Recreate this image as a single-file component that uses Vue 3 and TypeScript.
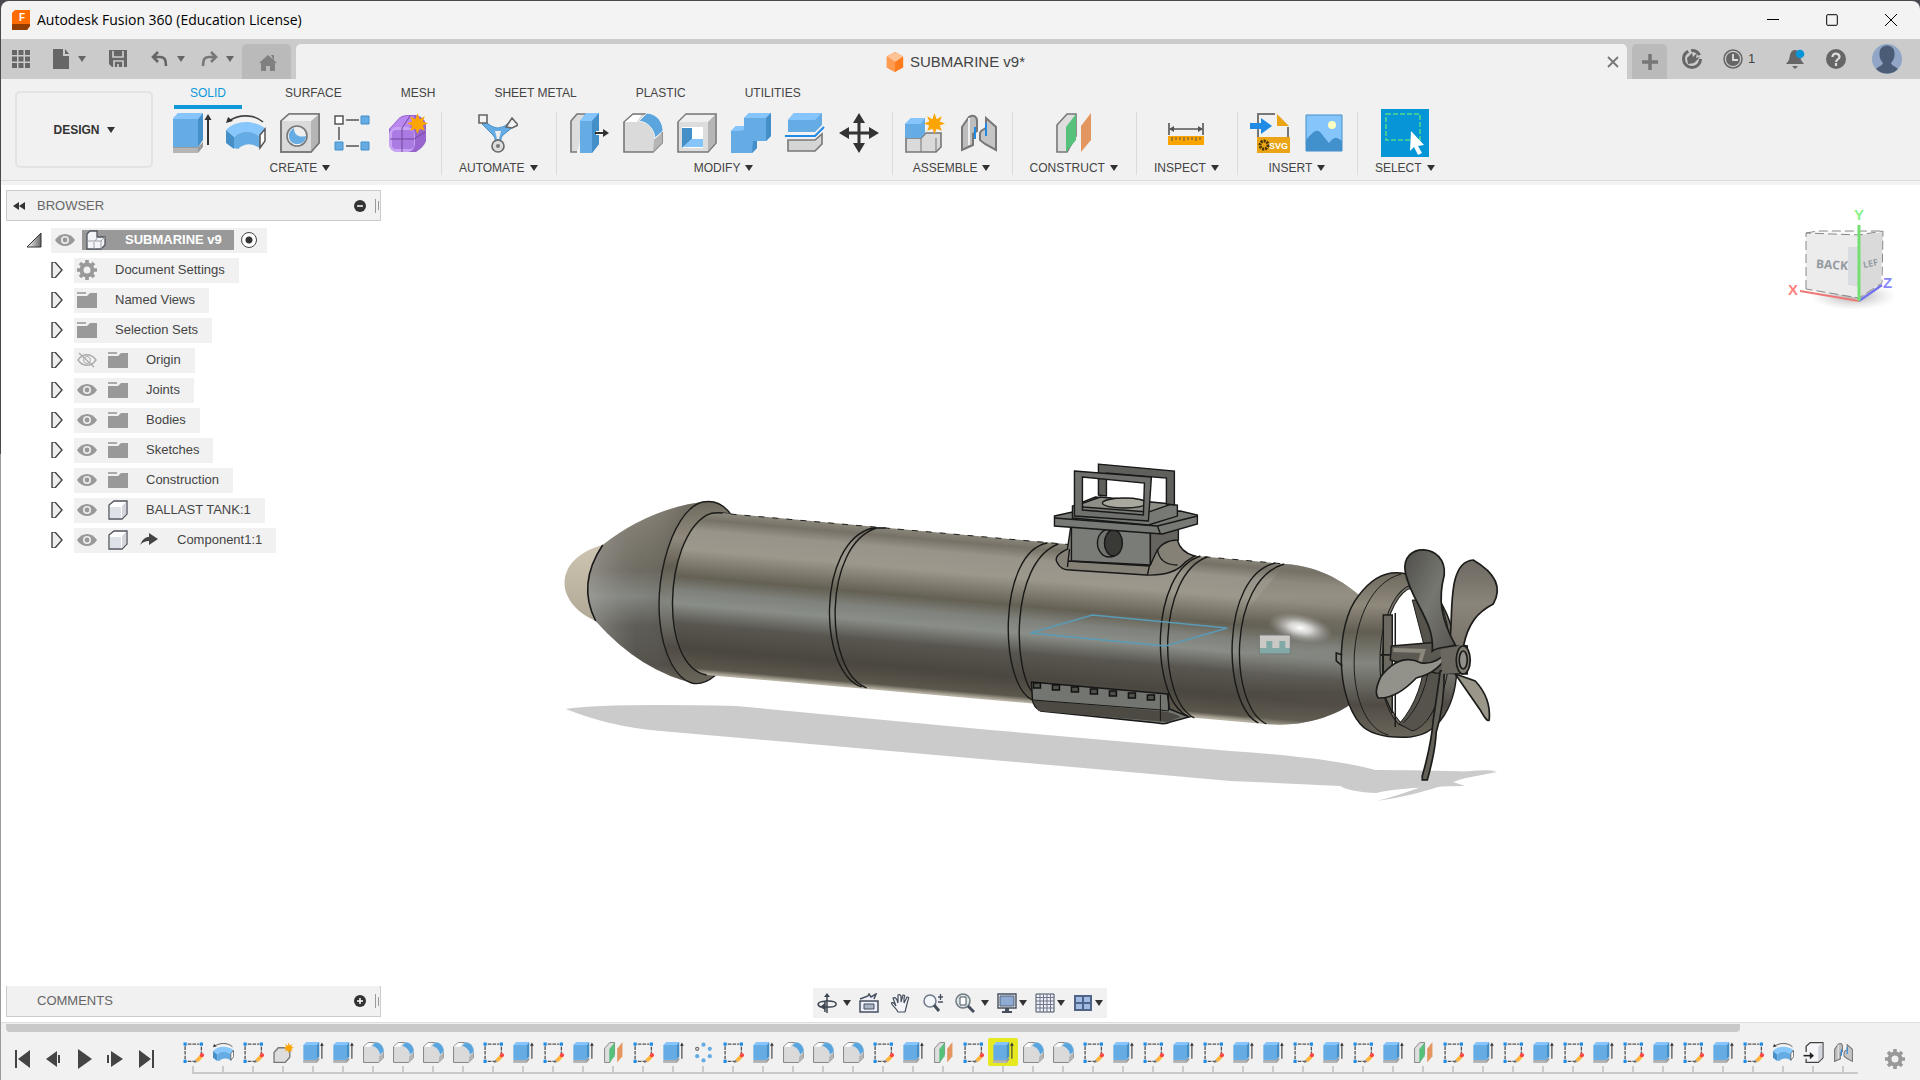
<script setup lang="ts">
interface Group { label: string; icons: string[]; active?: boolean }
interface Node { label: string; icons: string[] }
interface NavTool { icon: string; title: string; menu?: 'wide' | 'tight' }

const workspaces: string[] = ['SOLID', 'SURFACE', 'MESH', 'SHEET METAL', 'PLASTIC', 'UTILITIES']

const groups: Group[] = [
  { label: 'CREATE', icons: ['extrude', 'revolve', 'hole', 'pattern', 'form'] },
  { label: 'AUTOMATE', icons: ['automate'] },
  { label: 'MODIFY', icons: ['press', 'fillet', 'shell', 'combine', 'split', 'move'] },
  { label: 'ASSEMBLE', icons: ['component', 'joint'] },
  { label: 'CONSTRUCT', icons: ['plane'] },
  { label: 'INSPECT', icons: ['measure'] },
  { label: 'INSERT', icons: ['svgfile', 'image'] },
  { label: 'SELECT', icons: ['select'], active: true },
]

const nodes: Node[] = [
  { label: 'Document Settings', icons: ['gear'] },
  { label: 'Named Views', icons: ['folder'] },
  { label: 'Selection Sets', icons: ['folder'] },
  { label: 'Origin', icons: ['eyeoff', 'folder'] },
  { label: 'Joints', icons: ['eye', 'folder'] },
  { label: 'Bodies', icons: ['eye', 'folder'] },
  { label: 'Sketches', icons: ['eye', 'folder'] },
  { label: 'Construction', icons: ['eye', 'folder'] },
  { label: 'BALLAST TANK:1', icons: ['eye', 'box'] },
  { label: 'Component1:1', icons: ['eye', 'box', 'share'] },
]

const navTools: NavTool[] = [
  { icon: 'orbit', title: 'Orbit', menu: 'wide' },
  { icon: 'lookat', title: 'Look at' },
  { icon: 'hand', title: 'Pan' },
  { icon: 'zoom', title: 'Zoom' },
  { icon: 'fit', title: 'Fit', menu: 'wide' },
  { icon: 'display', title: 'Display settings', menu: 'tight' },
  { icon: 'grid', title: 'Grid and snaps', menu: 'tight' },
  { icon: 'views', title: 'Viewports', menu: 'tight' },
]

const codes: Record<string, string> = {
  S: 'sketch', R: 'revolve', N: 'newbody', E: 'extrude', F: 'fillet',
  P: 'plane', C: 'circular', X: 'derive', J: 'joint',
}
const features: string[] = 'SRSNEEFFFFSESEPSECSEFFFSEPSEFFSESESEESESEPSESESESESESRXJ'
  .split('')
  .map((c) => codes[c])
const currentFeature = 27

const playback: string[] = ['first', 'back', 'play', 'forward', 'last']
</script>

<template>
  <div class="window">
    <svg class="sprite" aria-hidden="true">
      <defs>
        <linearGradient id="hull" gradientUnits="userSpaceOnUse" x1="868" y1="526" x2="854" y2="687">
          <stop offset="0" stop-color="#8b867a" /><stop offset=".05" stop-color="#777267" />
          <stop offset=".12" stop-color="#99948a" /><stop offset=".24" stop-color="#9d988c" />
          <stop offset=".41" stop-color="#646054" /><stop offset=".5" stop-color="#80837d" />
          <stop offset=".58" stop-color="#8a8e88" /><stop offset=".7" stop-color="#595650" />
          <stop offset=".85" stop-color="#4a4640" /><stop offset=".97" stop-color="#5b574c" />
          <stop offset="1" stop-color="#b3ae9f" />
        </linearGradient>
        <linearGradient id="cone" x1="0" y1="0" x2="0" y2="1">
          <stop offset="0" stop-color="#8d877a" /><stop offset=".2" stop-color="#7a756a" />
          <stop offset=".38" stop-color="#6a665c" /><stop offset=".52" stop-color="#81847f" />
          <stop offset=".68" stop-color="#56544e" /><stop offset=".9" stop-color="#4c4942" />
          <stop offset="1" stop-color="#777266" />
        </linearGradient>
        <linearGradient id="coneEdge" x1="0" y1="0" x2="1" y2="0">
          <stop offset="0" stop-color="#aaa9a4" stop-opacity=".6" /><stop offset=".4" stop-color="#8d8c88" stop-opacity=".15" />
          <stop offset=".8" stop-color="#45423b" stop-opacity=".35" />
        </linearGradient>
        <linearGradient id="nose" x1="0" y1="0" x2="0" y2="1">
          <stop offset="0" stop-color="#cdc5b2" /><stop offset="1" stop-color="#b0a996" />
        </linearGradient>
        <linearGradient id="duct" x1="0" y1="0" x2="0" y2="1">
          <stop offset="0" stop-color="#6e695e" /><stop offset=".2" stop-color="#8f897c" />
          <stop offset=".36" stop-color="#625d52" /><stop offset=".55" stop-color="#83867f" />
          <stop offset=".8" stop-color="#504c45" /><stop offset="1" stop-color="#6b665b" />
        </linearGradient>
        <radialGradient id="glint"><stop offset="0" stop-color="#fff" /><stop offset=".35" stop-color="#eee" stop-opacity=".8" /><stop offset="1" stop-color="#aaa" stop-opacity="0" /></radialGradient>
        <radialGradient id="cubeShade"><stop offset="0" stop-color="#888" stop-opacity=".7" /><stop offset="1" stop-color="#bbb" stop-opacity="0" /></radialGradient>
        <linearGradient id="blade" x1="0" y1="0" x2="1" y2="1"><stop offset="0" stop-color="#4e4d49" /><stop offset=".5" stop-color="#777771" /><stop offset="1" stop-color="#55534e" /></linearGradient>
        <linearGradient id="bladeWarm" x1="0" y1="0" x2="0" y2="1"><stop offset="0" stop-color="#6d6961" /><stop offset=".5" stop-color="#8a847a" /><stop offset="1" stop-color="#78736a" /></linearGradient>
        <linearGradient id="turn" x1="0" y1="0" x2="1" y2="0"><stop offset="0" stop-color="#fff" /><stop offset="1" stop-color="#666" /></linearGradient>
      </defs>

      <symbol id="i-extrude" viewBox="0 0 40 40">
        <path d="M1 34h25l5-5v5l-5 6H1z" fill="#9b9b9b" /><path d="M1 35h25v5H1z" fill="#b5b5b5" />
        <path d="M1 5 6 0h25l-5 6v28H1z" fill="#85c5fb" /><path d="M1 6h25v28H1z" fill="#65ace4" /><path d="m26 6 5-6v27l-5 7z" fill="#458fc9" />
        <path d="M36 5v27" stroke="#333" stroke-width="2" /><path d="m32.500 7 3.500-6 3.500 6z" fill="#333" />
      </symbol>
      <symbol id="i-revolve" viewBox="0 0 40 40">
        <path d="M3 8C13 1 28 1 37 9" fill="none" stroke="#444" stroke-width="1.600" /><path d="m0 10 2-6 5 4z" fill="#333" />
        <path d="M0 17c9-10 28-11 40-1l-6 8C25 17 14 17 8 24z" fill="#87c7fc" /><path d="m0 17 8 7v12l-8-6z" fill="#458fc9" />
        <path d="M8 24c6-7 18-7 26 0v11c-8-5-15-5-22 1l-4-1z" fill="#65ace4" /><path d="m34 22 5-6v12l-5 7z" fill="#fff" stroke="#555" stroke-width="1.500" />
      </symbol>
      <symbol id="i-hole" viewBox="0 0 40 40">
        <path d="M1 8 9 1h30v29l-8 9H1z" fill="#dadada" stroke="#777" stroke-width="1.600" /><path d="m31 8 8-7v29l-8 9z" fill="#b5b5b5" /><path d="M1 8h30l8-7H9z" fill="#f0f0f0" />
        <circle cx="17" cy="23" r="10" fill="#eee" stroke="#777" stroke-width="1.600" /><path d="M14 15c-9 5-5 17 4 16 5 0 8-4 8-8-7 2-12-1-12-8z" fill="#65ace4" />
        <path d="M1 8 9 1h30v29l-8 9H1z" fill="none" stroke="#777" stroke-width="1.600" />
      </symbol>
      <symbol id="i-pattern" viewBox="0 0 40 40">
        <path d="M12 7h13M5 14v13M12 33h13" stroke="#555" stroke-width="1.500" /><path d="M1 3h8v8H1z" fill="#fff" stroke="#555" stroke-width="1.500" />
        <path d="M27 3h8v8h-8zM1 29h8v8H1zM27 29h8v8h-8z" fill="#65ace4" stroke="#458fc9" />
      </symbol>
      <symbol id="i-star" viewBox="0 0 20 20">
        <path d="m10 0 2 6 5-3-2 5 5 2-5 2 2 5-5-2-2 5-2-5-5 2 2-5-5-2 5-2-2-5 5 3z" fill="#fca500" />
      </symbol>
      <symbol id="i-form" viewBox="0 0 40 40">
        <path d="M1 16 11 5q3-3 9-3h8q8 2 10 9v17q-2 6-10 11H9q-8-2-8-9z" fill="#9765cd" /><path d="M2 16 11 6q3-3 9-3h6l-3 11-17 3z" fill="#b987ef" /><rect x="1" y="14" width="26" height="25" rx="8" fill="#c9a3f3" /><rect x="4" y="17" width="22" height="19" rx="4" fill="#a97be3" />
        <path d="M2 26h24l11-7M14 15v24M14 15l8-12" stroke="#71489d" fill="none" /><use href="#i-star" x="19" y="0" width="21" height="21" />
      </symbol>
      <symbol id="i-automate" viewBox="0 0 40 40">
        <path d="M7 8q7 7 13 7t12-6l3 5-10 8q-4 4-1 12h-8q3-8-1-12L4 11z" fill="#65ace4" stroke="#458fc9" /><path d="M17 18h6l-2 8h-2z" fill="#eee" />
        <path d="M1 2h8v8H1zM34 5l6 7-6 3-6-1z" fill="#f3f3f3" stroke="#666" stroke-width="1.600" /><circle cx="20" cy="33" r="6" fill="#ddd" stroke="#666" stroke-width="1.600" /><circle cx="20" cy="33" r="2" fill="#777" />
      </symbol>
      <symbol id="i-press" viewBox="0 0 40 40">
        <path d="M8 39H2V8l6-7h10" fill="#ddd" stroke="#777" stroke-width="1.600" /><path d="m11 8 6-8h13v31l-7 9H11z" fill="#65ace4" /><path d="m11 8 6-8h13l-7 8z" fill="#85c5fb" /><path d="m23 8 7-8v31l-7 9z" fill="#458fc9" />
        <path d="M27 20h9" stroke="#fff" stroke-width="4" /><path d="M26 20h10" stroke="#333" stroke-width="2" /><path d="m34 16 6 4-6 4z" fill="#333" />
      </symbol>
      <symbol id="i-fillet" viewBox="0 0 40 40">
        <path d="M1 9 10 1h15c8 2 14 10 14 18v11l-9 9H1z" fill="#dadada" stroke="#777" stroke-width="1.600" /><path d="m2 9 8-7h8l-4 7z" fill="#fff" /><path d="m31 27 8-7v10l-9 9z" fill="#b5b5b5" />
        <path d="m16 8 8-8c11 1 16 10 16 18l-8 7C31 16 25 9 16 8z" fill="#5ba5df" stroke="#f0f0f0" />
      </symbol>
      <symbol id="i-shell" viewBox="0 0 40 40">
        <path d="M1 9 9 1h30v29l-8 9H1z" fill="#ddd" stroke="#777" stroke-width="1.600" /><path d="M2 9h29l7-7H9z" fill="#f0f0f0" /><path d="m31 9 7-7v28l-7 8z" fill="#b5b5b5" /><path d="M5 14h21v21H5z" fill="#fff" /><path d="M5 15h10v11l-10 9z" fill="#458fc9" /><path d="M15 26h11v8H6z" fill="#85c5fb" />
      </symbol>
      <symbol id="i-combine" viewBox="0 0 40 40">
        <path d="m0 18 5-5h8V5l5-5h22v23l-5 5h-9v7l-5 5H0z" fill="#65ace4" /><path d="m0 18 5-5h8v4l-5 1zM13 5l5-5h22l-5 5z" fill="#85c5fb" /><path d="m35 5 5-5v23l-5 5zM22 28h4v7l-5 5z" fill="#458fc9" />
      </symbol>
      <symbol id="i-split" viewBox="0 0 40 40">
        <path d="m3 7 6-7h28v12l-7 7H3z" fill="#65ace4" /><path d="m3 7 6-7h28l-7 7z" fill="#85c5fb" /><path d="M0 23h30l9-9" fill="none" stroke="#1f8be5" stroke-width="2" /><path d="M3 27h27l7-6v10l-7 7H3z" fill="#d5d5d5" stroke="#777" stroke-width="1.600" />
      </symbol>
      <symbol id="i-move" viewBox="0 0 40 40"><path d="M20 5v30M5 20h30" stroke="#333" stroke-width="3" /><path d="m20 0 6 10H14zM20 40l6-10H14zM0 20l10-6v12zM40 20l-10-6v12z" fill="#333" /></symbol>
      <symbol id="i-component" viewBox="0 0 40 40">
        <path d="M1 25h15l5-5h15v14l-5 5H1z" fill="#dadada" stroke="#777" stroke-width="1.600" /><path d="M16 25v14M31 25v14" stroke="#777" /><path d="m0 11 6-6h14v15l-4 5H0z" fill="#65ace4" /><path d="m0 11 6-6h14l-4 6z" fill="#85c5fb" /><use href="#i-star" x="19" y="0" width="21" height="21" />
      </symbol>
      <symbol id="i-joint" viewBox="0 0 40 40">
        <path d="m3 14 7-10c5-3 8 0 8 4v10l-4 3v11L3 37z" fill="#bdbdbd" stroke="#777" stroke-width="2" /><path d="M21 20c1-4 4-3 6-5V5l10 9v23L26 31l-5-4z" fill="#c5c5c5" stroke="#777" stroke-width="2" /><path d="M10 5v27" stroke="#eee" stroke-width="2" /><path d="M16 14v12M27 10v13" stroke="#1f8be5" stroke-width="2" />
      </symbol>
      <symbol id="i-plane" viewBox="0 0 40 40">
        <path d="M3 39V12L13 1h9v22l-9 16z" fill="#dedede" stroke="#777" stroke-width="1.600" /><path d="m12 14 10-13v26L12 39z" fill="#55c17a" /><path d="m27 13 10-13v27L27 39z" fill="#e39660" />
      </symbol>
      <symbol id="i-measure" viewBox="0 0 40 40"><path d="M3 10v12M37 10v12M4 16h32" stroke="#555" stroke-width="1.600" /><path d="m3 16 5-3v6zM37 16l-5-3v6z" fill="#555" /><path d="M2 23h36v9H2z" fill="#fca500" /><path d="M6 24v4M10 24v3M14 24v3M18 24v4M22 24v3M26 24v3M30 24v4M34 24v3" stroke="#555" /></symbol>
      <symbol id="i-svgfile" viewBox="0 0 40 40">
        <path d="M8 24V1h17M38 14v10" fill="none" stroke="#777" stroke-width="2" /><path d="m27 1 12 12H27z" fill="#eaa416" /><path d="M7 24h33v16H7z" fill="#eaa416" /><path d="M0 10h11V5l11 8-11 8v-5H0z" fill="#1f8be5" />
        <circle cx="14" cy="32" r="4" fill="none" stroke="#443300" stroke-width="3" stroke-dasharray="2 1" />
      </symbol>
      <symbol id="i-image" viewBox="0 0 40 40"><path d="M2 2h36v36H2z" fill="#85c5fb" stroke="#458fc9" /><path d="M2 27c8-9 11-14 18-3l5 6c4-5 6-8 13-2v10H2z" fill="#4290cc" /><circle cx="28" cy="12" r="4" fill="#ffffc4" /></symbol>
      <symbol id="i-select" viewBox="0 0 48 48"><path d="M0 0h48v48H0z" fill="#0696d7" /><path d="M5 5h34v26H5z" fill="none" stroke="#57d98b" stroke-width="1.500" stroke-dasharray="5 2" /><path d="m30 22 13 14-6 1 4 7-4 2-4-8-4 4z" fill="#fff" /></symbol>
      <symbol id="i-sketch" viewBox="0 0 40 40"><path d="M4 8v26M9 4h22M35 9v13M9 37h16" fill="none" stroke="#555" stroke-width="2.500" stroke-dasharray="7 2" /><path d="M1 1h6v6H1zM32 1h6v6h-6zM1 34h6v6H1z" fill="#1f8be5" /><path d="m26 36 9-9" stroke="#ffb43b" stroke-width="7" /><path d="m21 40 2-6 4 4z" fill="#777" /><circle cx="36" cy="25" r="4" fill="#f44" /></symbol>
      <symbol id="i-newbody" viewBox="0 0 40 40"><path d="M2 20 10 11h22v18l-9 10H2z" fill="#ddd" stroke="#777" stroke-width="2.500" /><use href="#i-star" x="20" y="0" width="20" height="22" /></symbol>
      <symbol id="i-circular" viewBox="0 0 40 40"><g fill="#65ace4"><circle cx="20" cy="5" r="4" /><circle cx="32" cy="13" r="4" /><circle cx="32" cy="27" r="4" /><circle cx="20" cy="35" r="4" /><circle cx="8" cy="27" r="4" /></g><circle cx="8" cy="13" r="3" fill="#ddd" stroke="#666" stroke-width="2" /></symbol>
      <symbol id="i-derive" viewBox="0 0 40 40"><path d="M6 19V8l8-7h24v29l-9 9H6v-7" fill="#f5f5fa" stroke="#444" stroke-width="2.500" /><path d="M29 38V9l8-7v28z" fill="#d3d5dd" /><path d="M1 26h15" stroke="#222" stroke-width="3" /><path d="m13 19 8 7-8 7z" fill="#222" /></symbol>

      <symbol id="i-eye" viewBox="0 0 20 20"><path d="M0 10c5-8 15-8 20 0-5 8-15 8-20 0z" fill="#999" /><circle cx="10" cy="10" r="4" fill="#eee" /><circle cx="10" cy="10" r="2.400" fill="#999" /></symbol>
      <symbol id="i-eyeoff" viewBox="0 0 20 20"><path d="M1 10c5-7 13-7 18 0-5 7-13 7-18 0zM2 3l15 14" fill="none" stroke="#aaa" stroke-width="1.300" /><circle cx="10" cy="10" r="3.500" fill="none" stroke="#aaa" /></symbol>
      <symbol id="i-folder" viewBox="0 0 20 20"><path d="M0 2h9v2H0z" fill="#aaa" /><path d="M0 6h10l3-3h7v15H0z" fill="#999" /></symbol>
      <symbol id="i-gear" viewBox="0 0 20 20"><circle cx="10" cy="10" r="5.500" fill="none" stroke="#999" stroke-width="4" /><path d="M10 0v4M10 16v4M0 10h4M16 10h4M3 3l3 3M14 14l3 3M17 3l-3 3M6 14l-3 3" stroke="#999" stroke-width="3.600" /></symbol>
      <symbol id="i-box" viewBox="0 0 20 20"><path d="M1 5 6 1h13v13l-5 5H1z" fill="#fff" stroke="#50545c" stroke-width="1.300" /><path d="M2 7h11v11H2z" fill="#dfe1e8" /><path d="m14 6 4-4v12l-4 4z" fill="#d3d5dd" /></symbol>
      <symbol id="i-share" viewBox="0 0 20 20"><path d="M1 15c3-7 6-8 9-8V3l9 6-9 6v-4c-4 0-6 1-9 4z" fill="#444" /></symbol>
      <symbol id="i-assembly" viewBox="0 0 20 20"><path d="M1 4 4 1h7v6h8v8l-4 4H1z" fill="#f3f4f8" stroke="#50545c" stroke-width="1.300" /><path d="M8 12v7M1 11h8l3-4M15 11v8M9 11h6l4-4" stroke="#9a9ea8" fill="none" /></symbol>

      <symbol id="i-orbit" viewBox="0 0 20 20"><path d="M10 3v17M8 8v11M4 14c-5-2-4-6 7-6 11 0 10 6 2 6H6" fill="none" stroke="#3d4550" stroke-width="1.500" /><path d="m10 0 3 4H7zM8 10v7l-5-3z" fill="#3d4550" /></symbol>
      <symbol id="i-lookat" viewBox="0 0 20 20"><path d="M1 8h18v11H1zM1 6l8-3 1-2 2 3 5-3-2 5" fill="#eef" stroke="#46505c" stroke-width="1.500" /><path d="M5 11h10v5H5z" fill="#aab5c5" stroke="#46505c" /></symbol>
      <symbol id="i-hand" viewBox="0 0 20 20"><path d="M7 19c-2-4-5-6-7-9 2-1 4 1 5 3L2 5c2-1 3 0 4 2l1 3V2c2-1 2 0 3 1v6l2-7c2 0 2 1 1 3v5l3-6c2 0 2 1 1 3l-2 8-1 4z" fill="#f4f4f9" stroke="#46505c" stroke-width="1.200" /></symbol>
      <symbol id="i-zoom" viewBox="0 0 20 20"><circle cx="7" cy="8" r="6" fill="#f3f7fb" stroke="#70798a" stroke-width="1.500" /><path d="m11 12 5 6" stroke="#46505c" stroke-width="3" /><path d="M15 4h5M17.500 1v6M15 9h5" stroke="#46505c" stroke-width="1.300" /></symbol>
      <symbol id="i-fit" viewBox="0 0 20 20"><circle cx="8" cy="8" r="7" fill="#dfe8e8" stroke="#707a80" stroke-width="1.500" /><path d="M5 4h6v8H5z" fill="#fff" stroke="#46505c" /><path d="m13 13 6 6" stroke="#46505c" stroke-width="3" /></symbol>
      <symbol id="i-display" viewBox="0 0 20 20"><path d="M1 1h18v14H1z" fill="#eee" stroke="#46505c" stroke-width="1.400" /><path d="M3 3h14v10H3z" fill="#8faad3" stroke="#53647c" /><path d="M8 15h4v3h3v2H5v-2h3z" fill="#46505c" /></symbol>
      <symbol id="i-grid" viewBox="0 0 20 20"><path d="M1 1h18v18H1z" fill="#eef" stroke="#46505c" /><path d="M5 1v18M8.500 1v18M12 1v18M15.500 1v18M1 4.500h18M1 8h18M1 11.500h18M1 15h18" fill="none" stroke="#6d7681" /></symbol>
      <symbol id="i-views" viewBox="0 0 20 20"><path d="M1 2h18v16H1z" fill="#4f6486" /><path d="M3 4h6v5H3zM11 4h6v5h-6zM3 11h6v5H3zM11 11h6v5h-6z" fill="#a0bbe4" /></symbol>

      <symbol id="i-first" viewBox="0 0 20 20"><path d="M3 1h2v18H3zM18 1v18L6 10z" fill="#444" /></symbol>
      <symbol id="i-back" viewBox="0 0 20 20"><path d="M14 2v16L3 10zM15 6h2v8h-2z" fill="#444" /></symbol>
      <symbol id="i-play" viewBox="0 0 20 20"><path d="m4 0 14 10L4 20z" fill="#444" /></symbol>
      <symbol id="i-forward" viewBox="0 0 20 20"><path d="m6 2 12 8-12 8zM2 6h2v8H2z" fill="#444" /></symbol>
      <symbol id="i-last" viewBox="0 0 20 20"><path d="M16 1h2v18h-2zM3 1v18l12-9z" fill="#444" /></symbol>
    </svg>

    <header class="titlebar">
      <svg class="logo" viewBox="0 0 18 20"><path d="M3 0h15v16l-3 4H0V3z" fill="#ff6b00" /><path d="M0 14h18v2l-3 4H0z" fill="#943d00" /><text x="7" y="11" font-family="Liberation Sans, sans-serif" font-size="10" font-weight="bold" fill="#fff">F</text></svg>
      <h1>Autodesk Fusion 360 (Education License)</h1>
      <div class="sysbuttons">
        <button aria-label="Minimize"><svg viewBox="0 0 12 12"><path d="M0 5.500h12" /></svg></button>
        <button aria-label="Maximize"><svg viewBox="0 0 12 12"><rect x=".7" y=".7" width="10.600" height="10.600" rx="1" /></svg></button>
        <button aria-label="Close"><svg viewBox="0 0 12 12"><path d="m0 0 12 12M12 0 0 12" /></svg></button>
      </div>
    </header>

    <div class="appbar">
      <div class="quick">
        <button aria-label="Data panel"><svg class="s20" viewBox="0 0 20 20"><path d="M1 1h5v5H1zM7.500 1h5v5h-5zM14 1h5v5h-5zM1 7.500h5v5H1zM7.500 7.500h5v5h-5zM14 7.500h5v5h-5zM1 14h5v5H1zM7.500 14h5v5h-5zM14 14h5v5h-5z" fill="#666" /></svg></button>
        <button class="file" aria-label="File"><svg class="s20" viewBox="0 0 20 20"><path d="M2 0h10v7h6v13H2zM14 0l4 5h-4z" fill="#666" /></svg><i class="caret big"></i></button>
        <button class="save" aria-label="Save"><svg class="s20" viewBox="0 0 20 20"><path d="M1 1h18v17H4l-3-3z" fill="#666" /><path d="M5 2v6h10V2M6 18v-6h9v6M10 18v-3" stroke="#cbcbcb" stroke-width="1.700" fill="none" /></svg></button>
        <button class="undo" aria-label="Undo"><svg class="s20" viewBox="0 0 20 20"><path d="M3 8h7c5 0 6 3 6 9M8 3 3 8l5 5" stroke="#666" stroke-width="2.600" fill="none" /></svg><i class="caret big"></i></button>
        <button class="redo" aria-label="Redo"><svg class="s20" viewBox="0 0 20 20"><path d="M17 8h-7c-5 0-6 3-6 9M12 3l5 5-5 5" stroke="#777" stroke-width="2.600" fill="none" /></svg><i class="caret big"></i></button>
      </div>
      <button class="home" aria-label="Home"><svg class="s20" viewBox="0 0 20 20"><path d="m11 3 9 8h-2v8h-5v-5H9v5H4v-8H2zM14 3h3v6z" fill="#808080" /></svg></button>
      <div class="document">
        <div class="docname">
          <svg class="cube" viewBox="0 0 18 22"><path d="m9 0 9 5v12l-9 5-9-5V5z" fill="#ff7b1e" /><path d="m9 0 9 5-9 6-9-6z" fill="#ffc294" /><path d="m0 5 9 6v11l-9-5z" fill="#ff9b51" /></svg>
          <span>SUBMARINE v9*</span>
        </div>
        <button class="closedoc" aria-label="Close document"><svg viewBox="0 0 12 12"><path d="m1 1 10 10M11 1 1 11" stroke="#777" stroke-width="1.800" /></svg></button>
      </div>
      <button class="plus" aria-label="New design"><svg viewBox="0 0 16 16"><path d="M8 0v16M0 8h16" stroke="#777" stroke-width="3.500" /></svg></button>
      <div class="account">
        <button aria-label="Extensions"><svg class="s20" viewBox="0 0 20 20"><circle cx="10" cy="10" r="8.500" fill="none" stroke="#666" stroke-width="3" stroke-dasharray="36 3 10 4" /><path d="m6 15-1-6 5-5 1 4 4-4-1 5 4-1-6 6z" fill="#666" /></svg></button>
        <button class="jobs" aria-label="Job status"><svg class="s20" viewBox="0 0 20 20"><circle cx="10" cy="10" r="9" fill="none" stroke="#666" stroke-width="1.500" /><circle cx="10" cy="10" r="7" fill="#666" /><path d="M10 5v6h5" fill="none" stroke="#ddd" stroke-width="1.800" /></svg><span>1</span></button>
        <button class="bell" aria-label="Notifications"><svg class="s20" viewBox="0 0 20 20"><path d="M10 1c5 0 5 6 6 10l3 4H1l3-4c1-4 1-10 6-10zM7 17h6l-3 3z" fill="#666" /><circle cx="15" cy="5" r="4.300" fill="#0696d7" /></svg></button>
        <button class="help" aria-label="Help"><svg class="s20" viewBox="0 0 20 20"><circle cx="10" cy="10" r="10" fill="#666" /><path d="M6.500 8c0-5 7-4 7 0 0 2-3 2-3.500 5M10 14v3" stroke="#ddd" stroke-width="2.200" fill="none" /></svg></button>
        <button class="avatar" aria-label="Account"><svg viewBox="0 0 30 30"><circle cx="15" cy="15" r="15" fill="#91a6c6" /><path d="M4 25c3-3 6-3 7-6-4-4-4-9-3-13 2-6 12-6 14 0 1 4 1 9-3 13 1 3 4 3 7 6-6 6-16 6-22 0z" fill="#4b5d76" /></svg></button>
      </div>
    </div>

    <div class="ribbon">
      <button class="design">DESIGN <i class="caret"></i></button>
      <div class="tools">
        <nav class="tabs">
          <button v-for="(name, i) in workspaces" :key="name" :class="{ current: i === 0 }">{{ name }}</button>
        </nav>
        <div class="groups">
          <section v-for="g in groups" :key="g.label" class="group" :class="{ active: g.active }">
            <div class="icons">
              <button v-for="icon in g.icons" :key="icon" :aria-label="icon">
                <svg><use :href="'#i-' + icon" /><text v-if="icon === 'svgfile'" class="filetype" x="19" y="36">SVG</text></svg>
              </button>
            </div>
            <button class="menu">{{ g.label }} <i class="caret"></i></button>
          </section>
        </div>
      </div>
    </div>

    <main class="canvas">
      <svg class="model" viewBox="0 185 1920 837" aria-label="Submarine model">
        <g fill="#cbcbcb">
          <path d="M565 709Q605 703 735 706L990 730 1230 751Q1330 758 1375 770 1410 770 1448 771L1497 772 1450 781 1465 786Q1400 787 1376 793 1350 792 1340 786L1230 781 660 731Q610 727 565 709z" />
          <path d="M1376 801Q1395 797 1440 780 1465 768 1497 771 1470 775 1450 783 1410 797 1376 801z" />
        </g>
        <path d="M602 545C553 558 552 602 595 621Q576 586 602 545z" fill="url(#nose)" />
        <path d="M602 545Q650 507 709 501L696 684Q640 672 595 621 576 588 602 545z" fill="url(#cone)" />
        <path d="M602 545Q650 507 709 501L696 684Q640 672 595 621 576 588 602 545z" fill="url(#coneEdge)" />
        <path d="M602 545Q576 584 595 621" fill="none" stroke="#181818" stroke-width="1.600" />
        <path d="M730 514C722 503 712 500 702 502C686 506 672 528 664 560C654 600 658 640 671 664C682 684 697 690 714 676L722 513z" fill="url(#duct)" stroke="#1c1c1a" stroke-width="1.400" />
        <path d="M722 513 1285 564C1320 566 1349 584 1367 603V690C1345 715 1304 728 1265 724L706 675C663 666 657 535 712 513z" fill="url(#hull)" />
        <path d="M1285 564C1320 566 1349 584 1367 603V690C1345 715 1304 728 1265 724L1240 700V618z" fill="url(#duct)" opacity=".45" />
        <ellipse cx="1300" cy="628" rx="33" ry="14" fill="url(#glint)" transform="rotate(12 1300 628)" />
        <path d="m730 514 555 50" stroke="#222" stroke-dasharray="6 8" fill="none" />
        <g fill="none" stroke="#191917" stroke-width="1.400">
          <path d="M722 513Q712 512 706 515C663 540 658 666 706 675M872 528C816 542 817 672 861 687M876 528C822 545 823 672 866 688M885 528H872M1047 543C997 552 998 685 1032 700M1058 544C1009 562 1012 675 1034 694M1200 556C1149 572 1149 697 1187 716M1207 557C1157 574 1156 700 1194 718M1275 563C1220 575 1221 705 1258 723M1284 564C1227 580 1228 706 1266 724" />
        </g>
        <g stroke="#181818" stroke-width="1.400">
          <path d="M1067 549Q1052 556 1057 563 1060 570 1070 570L1146 575Q1174 576 1185 562L1194 556Q1180 552 1177 540L1178 524 1071 522z" fill="#858177" />
          <path d="M1071 523v38l79 4v-38z" fill="#7a7c77" /><path d="m1150 527 28-8v21q-17 0-23 14l-5 11z" fill="#66645e" />
          <path d="m1067 561 82 5-2 9M1069 549l-2 18M1157 549q2 16 20 16" fill="none" />
          <ellipse cx="1109" cy="543" rx="12" ry="14" fill="#72746f" /><ellipse cx="1113" cy="543" rx="9" ry="13" fill="#393936" />
          <path d="m1054 516 18-4 108-1 17 4v9l-35 10-108-8z" fill="#777a74" /><path d="m1054 518 103 8 40-10M1157 526l3 8" fill="none" />
          <path d="m1072 506 23-9 82 8v11l-29 9-76-7z" fill="#777a74" /><path d="m1080 504 20-7 71 7-23 8-65-5z" fill="#8d8e86" /><ellipse cx="1124" cy="503" rx="22" ry="5" fill="#a8a89f" />
          <path fill-rule="evenodd" d="m1098 464 76 7v34l-8-1v-26l-60-5v23l-8-1z" fill="#5f605b" />
          <path fill-rule="evenodd" d="m1074 471 77 6-3 44-74-5zM1082 477v33l61 5 1-32z" fill="#6f716c" />
        </g>
        <path d="m1092 615 135 13-62 18-135-13z" fill="none" stroke="#599bb6" stroke-width="1.500" />
        <path d="m1031 682 136 12 2 15 20 8-19 5q-5 3-13 1L1040 711q-7-4-8-11z" fill="#737670" stroke="#181818" stroke-width="1.500" />
        <path d="m1032 700 128 11q15 2 20 6l-13 5-129-11z" fill="#4d4a43" />
        <path v-for="n in 7" :key="n" d="M1033 683h7v5h-7z" :transform="`translate(${(n - 1) * 19} ${(n - 1) * 2})`" fill="#50504a" stroke="#111" stroke-width="1.500" />
        <path d="M1160 695v26M1032 700l128 10 8 1v-18" fill="none" stroke="#181818" />
        <path d="M1259 635h31v18h-31z" fill="#cac9c5" /><path d="M1259 648h7v-7h6v7h7v-7h6v7h5v6h-31z" fill="#81aaa7" /><path d="M1259 635h31v19h-31z" fill="none" stroke="#777" />
        <path fill-rule="evenodd" d="M1401 573Q1377 570 1358 596C1335 625 1335 695 1360 724Q1373 739 1410 737C1480 730 1466 581 1401 573zM1407 588C1378 606 1370 692 1399 723 1430 742 1466 665 1438 600Q1426 583 1407 588z" fill="url(#duct)" stroke="#1c1c1a" stroke-width="1.500" />
        <path d="M1407 588C1378 606 1370 692 1399 723 1430 742 1466 665 1438 600Q1426 583 1407 588z" fill="none" stroke="#1c1c1a" stroke-width="3.500" />
        <path d="M1407 588C1378 606 1370 692 1399 723 1430 742 1466 665 1438 600Q1426 583 1407 588z" fill="none" stroke="#77736a" stroke-width="1.500" />
        <path d="M1383 615h9v98l-9-20zM1395 613v114" fill="#6c6961" stroke="#1c1c1a" stroke-width="1.500" /><path d="M1342 655l-6-2v8l6 5M1380 655h15" fill="none" stroke="#1c1c1a" stroke-width="1.700" />
        <path d="M1399 724Q1424 695 1425 650L1412 600 1436 600C1458 650 1440 724 1412 731z" fill="#56534c" stroke="#1c1c1a" /><path d="M1403 723Q1427 700 1431 650M1401 574C1341 590 1340 723 1388 735" fill="none" stroke="#1c1c1a" />
        <path d="m1391 646 48-4 28 4v28l-32-1-45-13z" fill="#5c5953" stroke="#1c1c1a" stroke-width="1.500" /><path d="m1393 650 30 1-4 13" fill="none" stroke="#8d887e" stroke-width="4" />
        <g stroke="#1c1c1a" stroke-width="1.700">
          <path d="M1449 645C1454 620 1445 562 1473 560Q1507 580 1493 604C1478 612 1468 622 1463 647z" fill="url(#bladeWarm)" />
          <path d="M1432 651C1435 622 1410 600 1405 572 1400 541 1447 543 1444 575 1438 598 1440 618 1455 645 1445 648 1437 647 1432 651z" fill="url(#blade)" />
          <path d="M1449 650Q1436 665 1421 663 1400 652 1381 676 1373 692 1378 698 1396 699 1416 678 1441 672 1449 650z" fill="#93928a" />
          <path d="m1455 674 25 36q7 13 9 10 2-22-14-39z" fill="#9a968a" />
          <path d="m1440 671q-4 30-7 49-2 25-11 56v4h5q8-28 9-48 8-25 8-61z" fill="#646159" />
          <path d="m1440 650 22-5v28l-20 1z" fill="#6a675f" stroke="none" />
          <ellipse cx="1463" cy="660" rx="7" ry="14" fill="#817c72" /><ellipse cx="1463" cy="660" rx="4" ry="9" fill="#92908a" />
        </g>
      </svg>

      <div class="side">
        <section class="panel">
          <button aria-label="Collapse"><svg class="rewind" viewBox="0 0 12 8"><path d="m6 0v8L0 4zM12 0v8L6 4z" fill="#333" /></svg></button>
          <h2>BROWSER</h2>
          <button class="sign" aria-label="Minimize browser"><svg viewBox="0 0 12 12"><circle cx="6" cy="6" r="6" fill="#333" /><path d="M3 6h6" stroke="#fff" stroke-width="1.500" /></svg></button>
        </section>
        <ul class="tree">
          <li class="root">
            <button class="twist" aria-label="Collapse"><svg viewBox="0 0 16 16"><path d="M15 1v14H1z" fill="url(#turn)" stroke="#333" /></svg></button>
            <div class="row">
              <svg class="s20"><use href="#i-eye" /></svg>
              <span class="selected"><svg class="s20"><use href="#i-assembly" /></svg><b>SUBMARINE v9</b></span>
              <input type="radio" checked aria-label="Activate component" />
            </div>
          </li>
          <li v-for="n in nodes" :key="n.label">
            <button class="twist" aria-label="Expand"><svg viewBox="0 0 16 16"><path d="M3 0h3l7 8-7 8H3z" fill="#eee" stroke="#444" stroke-width="1.400" /></svg></button>
            <div class="row">
              <svg v-for="icon in n.icons" :key="icon" class="s20"><use :href="'#i-' + icon" /></svg>
              <span>{{ n.label }}</span>
            </div>
          </li>
        </ul>
      </div>

      <svg class="viewcube" viewBox="0 0 116 110" aria-label="View cube">
        <ellipse cx="66" cy="91" rx="43" ry="14" fill="url(#cubeShade)" />
        <path d="m19 28 53 2v63l-53-9z" fill="#ececec" /><path d="m72 30 24-3-2 51-22 15z" fill="#dadada" /><path d="m19 28 12-2h65l-24 4z" fill="#f8f8f8" />
        <path d="M61 42h11v40l-11-2z" fill="#d9dce0" />
        <path d="M19 84V28l53 2 24-4-1 52-23 15zM19 28l12-2h65M72 30v63" fill="none" stroke="#888" stroke-dasharray="9 4" />
        <g font-family="Open Sans, sans-serif" font-weight="bold" fill="#949aa0"><text x="29" y="63" font-size="12" transform="rotate(4 30 60)">BACK</text><text x="77" y="63" font-size="9" transform="rotate(-12 78 64)">LEF</text></g>
        <path d="m13 86 59 10" stroke="#ee7777" stroke-width="2" /><path d="m72 96 23-16" stroke="#7171ee" stroke-width="2.500" /><path d="M72 20v76" stroke="#73df73" stroke-width="3" />
        <g font-family="Liberation Sans, sans-serif" font-size="15" font-weight="bold"><text x="67" y="15" fill="#8bf28b">Y</text><text x="1" y="90" fill="#ff8080">X</text><text x="96" y="83" fill="#8888ff">Z</text></g>
      </svg>

      <section class="panel comments">
        <h2>COMMENTS</h2>
        <button class="sign" aria-label="Open comments"><svg viewBox="0 0 12 12"><circle cx="6" cy="6" r="6" fill="#333" /><path d="M3 6h6M6 3v6" stroke="#fff" stroke-width="1.500" /></svg></button>
      </section>

      <div class="navbar">
        <button v-for="t in navTools" :key="t.icon" :class="t.menu" :aria-label="t.title"><svg class="s20"><use :href="'#i-' + t.icon" /></svg><i v-if="t.menu" class="caret"></i></button>
      </div>
    </main>

    <footer class="timeline">
      <div class="scroll"></div>
      <div class="strip">
        <div class="playback"><button v-for="p in playback" :key="p" :aria-label="p"><svg class="s20"><use :href="'#i-' + p" /></svg></button></div>
        <ol class="features">
          <li v-for="(f, i) in features" :key="i" :class="{ now: i === currentFeature }"><button :aria-label="f"><svg><use :href="'#i-' + f" /></svg></button></li>
        </ol>
        <button class="settings" aria-label="Timeline settings"><svg class="s20"><use href="#i-gear" /></svg></button>
      </div>
    </footer>
  </div>
</template>

<style>
body { margin: 0; background: #3f3b44; }
</style>

<style scoped>
* { box-sizing: border-box; }
.window { min-height: 100vh; display: flex; flex-direction: column; padding: 1px 0 0 1px; background: linear-gradient(#4b474f 42%, #9b9b9b 42%); color: #444; font: 12px/16px "Liberation Sans", Arial, sans-serif; }
.sprite { position: absolute; width: 0; height: 0; }
button { display: flex; align-items: center; justify-content: center; padding: 0; border: 0; background: none; color: inherit; font: inherit; }
svg { display: block; flex: none; }
h1, h2 { margin: 0; font-weight: normal; }
ul, ol { list-style: none; margin: 0; padding: 0; }
.s20 { width: 20px; height: 20px; }
.caret { display: inline-block; border: 4px solid transparent; border-top: 6px solid #333; border-bottom: 0; }
.caret.big { border-top-color: #666; }

.titlebar { height: 38px; display: flex; align-items: center; padding-left: 11px; background: #f3f3f3; border-radius: 8px 8px 0 0; color: #000; }
.logo { width: 18px; height: 20px; }
.titlebar h1 { margin-left: 7px; font: 14px/20px "Open Sans", "Noto Sans", sans-serif; }
.sysbuttons { display: flex; margin-left: auto; }
.sysbuttons button { width: 59px; height: 38px; }
.sysbuttons svg { width: 12px; height: 12px; fill: none; stroke: #000; stroke-width: 1; }

.appbar { height: 40px; display: flex; align-items: flex-end; background: #cbcbcb; }
.quick { display: flex; align-items: center; height: 40px; width: 241px; padding-left: 10px; }
.quick button { gap: 7px; }
.file { margin-left: 20px; }
.save { margin-left: 22px; }
.undo { margin-left: 22px; }
.redo { margin-left: 14px; }
.home { width: 49px; height: 35px; background: #bababa; border-radius: 5px 5px 0 0; }
.document { flex: 1; height: 35px; display: flex; align-items: center; margin-left: 5px; background: #f1f1f1; border-radius: 5px 5px 0 0; }
.docname { flex: 1; display: flex; align-items: center; justify-content: center; gap: 6px; padding-left: 16px; font-size: 15px; line-height: 20px; }
.cube { width: 18px; height: 20px; }
.closedoc { width: 28px; height: 35px; }
.closedoc svg { width: 12px; height: 12px; }
.plus { width: 35px; height: 35px; margin-left: 5px; background: #bababa; border-radius: 5px 5px 0 0; }
.plus svg { width: 16px; height: 16px; }
.account { width: 253px; height: 40px; display: flex; align-items: center; padding-left: 15px; }
.jobs { margin-left: 21px; gap: 5px; font-size: 13px; }
.bell { margin-left: 30px; }
.help { margin-left: 21px; }
.avatar { margin-left: 26px; }
.avatar svg { width: 30px; height: 30px; }

.ribbon { display: flex; height: 106px; padding-left: 14px; background: #f1f1f1; border-bottom: 4px solid #f3f3f3; box-shadow: inset 0 -1px #dcdcdc; }
.design { width: 138px; height: 77px; margin-top: 12px; gap: 7px; border: 2px solid #e3e3e3; border-radius: 5px; font-weight: bold; color: #333; }
.tools { flex: 1; }
.tabs { display: flex; gap: 27px; height: 30px; padding-left: 21px; }
.tabs button { padding: 2px 16px 0; border-bottom: 4px solid transparent; }
.tabs .current { color: #0d98db; border-color: #0d98db; }
.groups { display: flex; padding-left: 6px; }
.group { display: flex; flex-direction: column; align-items: center; height: 70px; }
.group + .group { background: linear-gradient(#dcdcdc, #dcdcdc) left 3px / 1px 63px no-repeat; }
.icons { flex: none; display: flex; gap: 14px; height: 48px; align-items: center; padding: 0 13px; }
.icons svg { width: 40px; height: 40px; }
.active .icons svg { width: 48px; height: 48px; }
.filetype { font: bold 9px "Liberation Sans", sans-serif; fill: #fff; }
.menu { gap: 5px; padding: 3px 18px 0; white-space: nowrap; }

.canvas { position: relative; flex: 1; display: flex; flex-direction: column; justify-content: space-between; min-height: 600px; background: #fff; }
.model { position: absolute; inset: 0; width: 100%; height: 100%; }
.side { position: relative; padding: 5px 0 0 5px; }
.panel { position: relative; display: flex; align-items: center; width: 375px; height: 31px; padding: 0 14px 0 6px; background: linear-gradient(#999, #999) right 4px center / 1px 14px no-repeat, linear-gradient(#999, #999) right 1px center / 1px 9px no-repeat, #f1f1f1; border: 1px solid #ccc; }
.panel h2 { margin-left: 12px; font-size: 13px; color: #666; }
.rewind { width: 12px; height: 8px; }
.sign { margin-left: auto; }
.sign svg { width: 12px; height: 12px; }
.comments { margin: 0 0 5px 5px; border-top: 0; }
.comments h2 { margin-left: 24px; }
.tree { padding-top: 4px; font-size: 13px; }
.tree li { display: flex; align-items: center; height: 30px; padding-left: 43px; }
.tree .root { padding-left: 20px; }
.twist { width: 16px; margin-right: 9px; }
.twist svg { width: 16px; height: 16px; }
.row { display: flex; align-items: center; gap: 11px; height: 25px; padding: 0 14px 0 3px; background: #f1f1f1; white-space: nowrap; }
.row > span:last-child { margin-left: 7px; }
.root .row { gap: 7px; padding: 0 10px 0 4px; }
.selected { display: flex; align-items: center; gap: 19px; height: 20px; padding: 0 12px 0 4px; background: #999; color: #fff; }
.row input { appearance: none; width: 16px; height: 16px; margin: 0; border: 1px solid #444; border-radius: 50%; background: radial-gradient(#333 3px, #fff 4px); }
.viewcube { position: absolute; top: 20px; right: 17px; width: 116px; height: 110px; }
.navbar { position: absolute; bottom: 4px; left: 50%; display: flex; align-items: center; gap: 12px; height: 30px; padding: 0 4px; margin-left: -148px; background: #f1f1f1; }
.navbar .wide { gap: 6px; margin-right: -4px; }
.navbar .tight { gap: 2px; margin-right: -4px; }
.navbar .tight:last-child { margin-right: 0; }

.timeline { height: 58px; padding-top: 1px; background: #f1f1f1; border-top: 1px solid #dedede; }
.scroll { width: 1734px; max-width: 91%; height: 8px; margin-left: 5px; background: #c9c9c9; border-radius: 0 0 4px 4px; }
.strip { display: flex; align-items: flex-start; padding-top: 6px; }
.playback { display: flex; gap: 11px; width: 177px; padding: 11px 0 0 11px; }
.features { display: flex; flex: 1; min-width: 0; overflow: hidden; }
.features li { flex: none; width: 30px; }
.features button { width: 30px; height: 28px; border-radius: 2px; }
.features svg { width: 21px; height: 21px; }
.features li::after { content: ""; display: block; height: 8px; background: linear-gradient(#c9c9c9, #c9c9c9) center top / 2px 8px no-repeat, linear-gradient(#c9c9c9, #c9c9c9) bottom / 100% 2px no-repeat; }
.features li:first-child::after { margin-left: 14px; background-position: left top, bottom; }
.now button { background: #e6e820; }
.settings { width: 50px; padding-top: 11px; }
</style>
